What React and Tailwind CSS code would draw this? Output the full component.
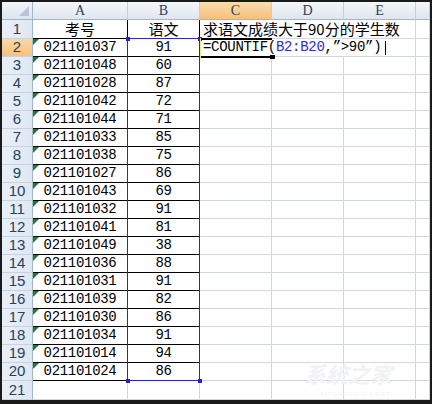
import React from "react";

const scores = [
  ["021101037", 91],
  ["021101048", 60],
  ["021101028", 87],
  ["021101042", 72],
  ["021101044", 71],
  ["021101033", 85],
  ["021101038", 75],
  ["021101027", 86],
  ["021101043", 69],
  ["021101032", 91],
  ["021101041", 81],
  ["021101049", 38],
  ["021101036", 88],
  ["021101031", 91],
  ["021101039", 82],
  ["021101030", 86],
  ["021101034", 91],
  ["021101014", 94],
  ["021101024", 86],
];

const colHead =
  "flex items-center justify-center border-r border-b border-r-[#c3cfdd] border-b-[#9eb6ce] font-['Liberation_Serif',serif] text-[14px] text-[#27415f]";
const rowHead =
  "flex items-center justify-center border-r border-b border-r-[#9eb6ce] border-b-[#c8d3e0] font-['Liberation_Sans',sans-serif] text-[15px] text-[#27415f]";
const plain = "border-r border-b border-[#d0d7e5]";
const mono = "font-['Liberation_Mono','Noto_Sans_CJK_SC',monospace] text-[14px] tracking-[-0.3px] text-black";
const cjk = "font-['Noto_Sans_CJK_SC',sans-serif] text-[15px] text-black";

const Triangle = () => (
  <span className="absolute left-0 top-0 w-0 h-0 border-t-[6px] border-t-[#1d7d2a] border-r-[6px] border-r-transparent" />
);

const RowHeader = ({ n }) => (
  <div
    className={`${rowHead} ${
      n === 2
        ? "bg-gradient-to-b from-[#fbd8a2] to-[#f5c27d]"
        : "bg-gradient-to-r from-[#eaf0f8] to-[#dfe7f2]"
    }`}
  >
    {n}
  </div>
);

export default function App() {
  return (
    <div className="w-[432px] h-[404px] bg-[#1a1a1a] pt-[2px] px-[2px] pb-[4px]">
      <div className="relative w-[428px] h-[398px] bg-white overflow-hidden">
        <div className="grid grid-cols-[31px_95px_72px_72px_72px_72px_14px] grid-rows-[18px_19px_repeat(19,18px)_19px]">
          {/* header row */}
          <div className="relative border-r border-b border-r-[#9eb6ce] border-b-[#9eb6ce] bg-gradient-to-b from-[#f1f5fa] to-[#dce4ee]">
            <svg className="absolute right-[3px] bottom-[3px]" width="10" height="10" viewBox="0 0 10 10">
              <polygon points="10,0 10,10 0,10" fill="#b5c6d9" />
            </svg>
          </div>
          <div className={`${colHead} bg-gradient-to-b from-[#f4f7fb] to-[#dfe6ef]`}>A</div>
          <div className={`${colHead} bg-gradient-to-b from-[#f4f7fb] to-[#dfe6ef]`}>B</div>
          <div className={`${colHead} bg-gradient-to-b from-[#fbdcaa] to-[#f5c07a]`}>C</div>
          <div className={`${colHead} bg-gradient-to-b from-[#f4f7fb] to-[#dfe6ef]`}>D</div>
          <div className={`${colHead} bg-gradient-to-b from-[#f4f7fb] to-[#dfe6ef]`}>E</div>
          <div className={`${colHead} bg-gradient-to-b from-[#f4f7fb] to-[#dfe6ef]`}></div>

          {/* row 1 */}
          <RowHeader n={1} />
          <div className={`flex items-center justify-center border-r border-b border-black ${cjk}`}>考号</div>
          <div className={`flex items-center justify-center border-r border-b border-black ${cjk}`}>语文</div>
          <div className={`col-span-3 flex items-center pl-[3px] whitespace-nowrap border-r border-b border-r-[#d0d7e5] border-b-[#d0d7e5] ${cjk}`}>
            求语文成绩大于90分的学生数
          </div>
          <div className={plain}></div>

          {/* data rows 2..20 */}
          {scores.map(([id, score], i) => {
            const n = i + 2;
            return (
              <React.Fragment key={id}>
                <RowHeader n={n} />
                <div className={`relative flex items-center justify-center border-r border-b border-black ${mono}`}>
                  <Triangle />
                  {id}
                </div>
                <div className={`flex items-center justify-center border-r border-b border-black ${mono}`}>{score}</div>
                {n === 2 ? (
                  <div className={`col-span-3 flex items-center pl-[3px] whitespace-nowrap border-r border-b border-[#d0d7e5] ${mono}`}>
                    <span>=COUNTIF(</span>
                    <span className="text-[#2b2bd0]">B2:B20</span>
                    <span>,”&gt;90”)</span>
                    <span className="ml-[4px] h-[14px] border-l border-black" />
                  </div>
                ) : (
                  <>
                    <div className={plain}></div>
                    <div className={plain}></div>
                    <div className={plain}></div>
                  </>
                )}
                <div className={plain}></div>
              </React.Fragment>
            );
          })}

          {/* row 21 */}
          <RowHeader n={21} />
          <div className={plain}></div>
          <div className={plain}></div>
          <div className={plain}></div>
          <div className={plain}></div>
          <div className={plain}></div>
          <div className={plain}></div>
        </div>

        {/* range highlight B2:B20 */}
        <div className="absolute left-[125px] top-[36px] w-[73px] h-[343px] border border-[#2626d4] pointer-events-none" />
        <div className="absolute left-[124px] top-[35px] w-[4px] h-[4px] bg-[#2222c8]" />
        <div className="absolute left-[196px] top-[35px] w-[4px] h-[4px] bg-[#2222c8]" />
        <div className="absolute left-[124px] top-[377px] w-[4px] h-[4px] bg-[#2222c8]" />
        <div className="absolute left-[196px] top-[377px] w-[4px] h-[4px] bg-[#2222c8]" />

        {/* active cell C2 */}
        <div className="absolute left-[198px] top-[36px] w-[72px] h-[2px] bg-black" />
        <div className="absolute left-[198px] top-[54px] w-[72px] h-[2px] bg-black" />
        <div className="absolute left-[198px] top-[36px] w-[1px] h-[20px] bg-[#f3e48a]" />
        <div className="absolute left-[268px] top-[53px] w-[5px] h-[4px] bg-black" />

        {/* faint watermark */}
        <div className="absolute left-[302px] top-[360px] font-['Noto_Sans_CJK_SC',sans-serif] text-[22px] font-bold italic leading-none text-[#f1f2f5] pointer-events-none">
          系统之家
        </div>
        <div className="absolute left-[318px] top-[389px] font-['Liberation_Sans',sans-serif] text-[6px] tracking-[1px] leading-none text-[#f1f2f5] pointer-events-none">
          XITONGZHIJIA.NET
        </div>
      </div>
    </div>
  );
}
